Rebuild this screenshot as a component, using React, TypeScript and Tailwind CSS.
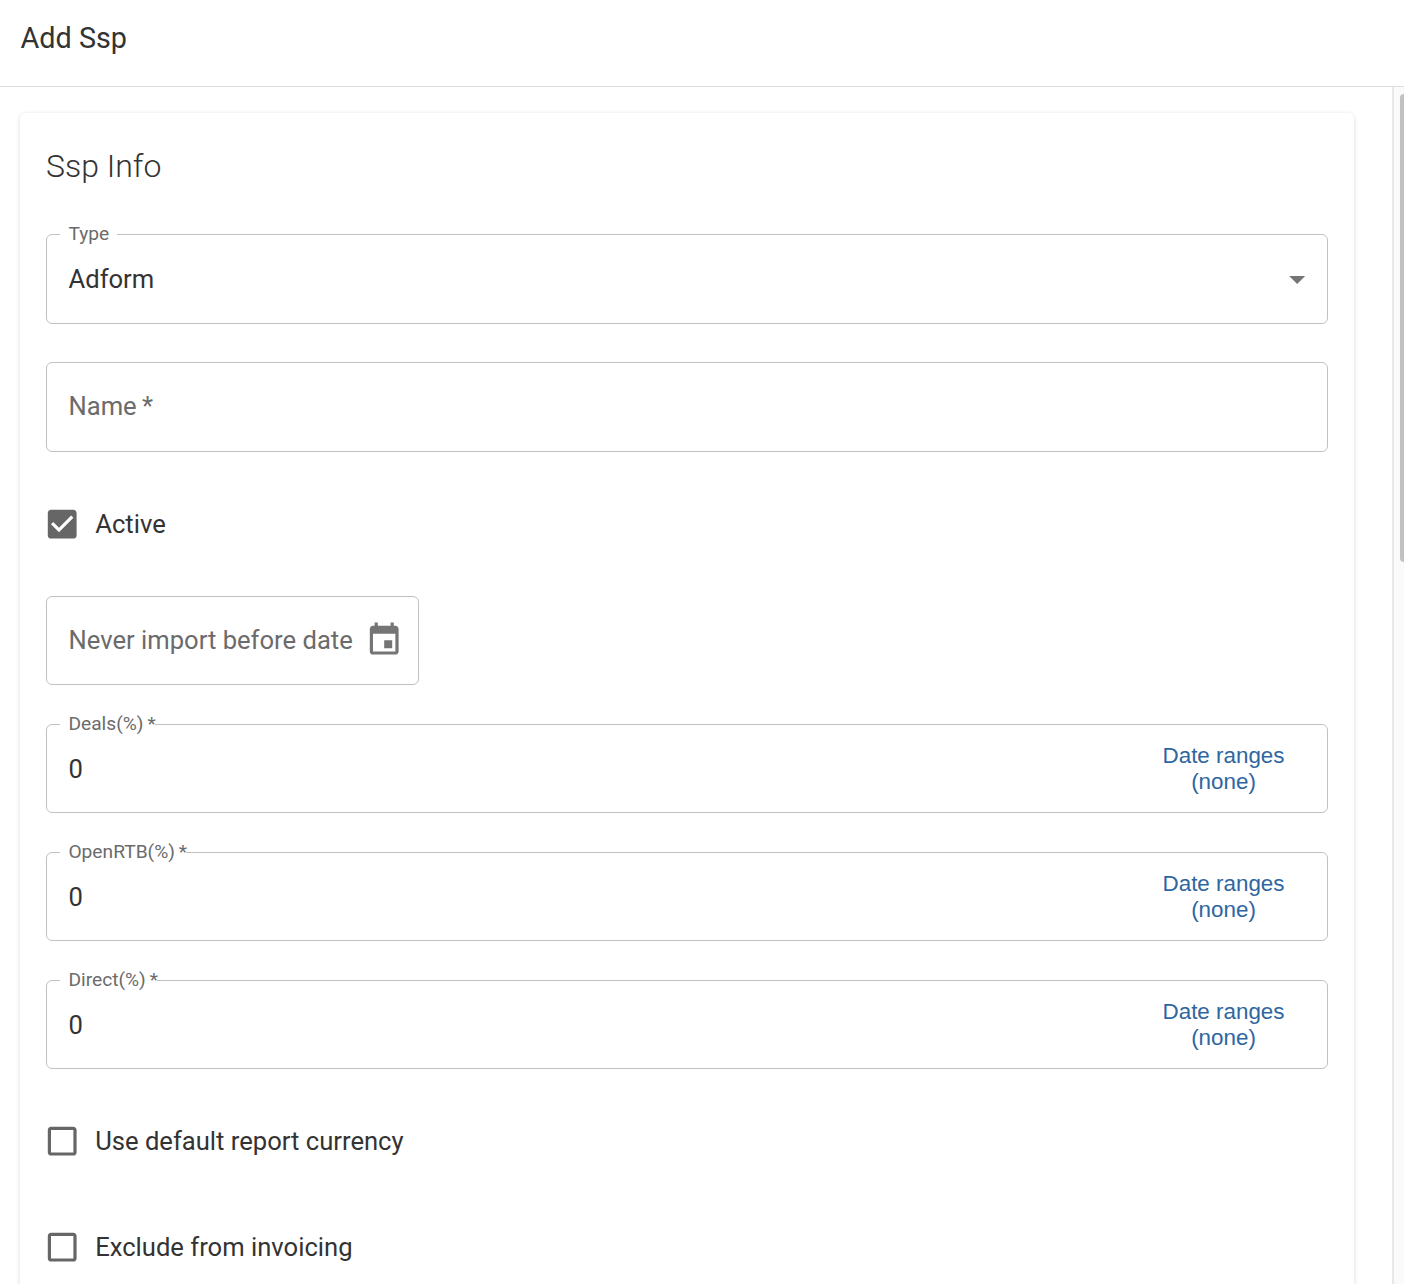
import { useState } from "react";
import type { ReactNode } from "react";
import clsx from "clsx";

type OutlinedFieldProps = {
  label?: string;
  notch?: string;
  className?: string;
  children: ReactNode;
};

const OutlinedField = ({ label, notch, className, children }: OutlinedFieldProps) => (
  <div className={clsx("relative flex items-center rounded-[6px] border border-[#c1c1c1] pl-[21.5px]", className)}>
    {label && (
      <>
        <span className={clsx("absolute -top-px left-[13px] h-px bg-white", notch)} />
        <label className="absolute -top-[13px] left-[21.4px] whitespace-pre text-[19.2px] leading-6 text-[#6b6b6b]">
          {label}
        </label>
      </>
    )}
    {children}
  </div>
);

type CheckboxProps = {
  label: string;
  checked: boolean;
  onChange: () => void;
  className?: string;
};

const Checkbox = ({ label, checked, onChange, className }: CheckboxProps) => (
  <button
    type="button"
    role="checkbox"
    aria-checked={checked}
    onClick={onChange}
    className={clsx("-ml-[3.2px] flex h-10 w-fit items-center gap-[14px]", className)}
  >
    <svg viewBox="0 0 24 24" className="size-[38.4px] fill-[#666]">
      {checked ? (
        <path d="M19 3H5c-1.11 0-2 .9-2 2v14c0 1.1.89 2 2 2h14c1.11 0 2-.9 2-2V5c0-1.1-.89-2-2-2zm-9 14l-5-5 1.41-1.41L10 14.17l7.59-7.59L19 8l-9 9z" />
      ) : (
        <path d="M19 5v14H5V5h14m0-2H5c-1.1 0-2 .9-2 2v14c0 1.1.9 2 2 2h14c1.1 0 2-.9 2-2V5c0-1.1-.9-2-2-2z" />
      )}
    </svg>
    <span>{label}</span>
  </button>
);

export default function App() {
  const [active, setActive] = useState(true);
  const [defaultCurrency, setDefaultCurrency] = useState(false);
  const [excluded, setExcluded] = useState(false);

  // \u2009 is the thin space before the required mark
  const shares = [
    { label: "Deals(%)\u2009*", notch: "w-[95px]" },
    { label: "OpenRTB(%)\u2009*", notch: "w-[126px]" },
    { label: "Direct(%)\u2009*", notch: "w-[97px]" },
  ];

  return (
    <div className="flex h-[1284px] w-[1404px] flex-col overflow-hidden bg-white font-['Roboto',sans-serif] text-[25.6px] text-[#333] antialiased">
      <header className="h-[87px] shrink-0 border-b border-[#dedede] pl-[20.5px] pt-[18px]">
        <h1 className="text-[28.8px] leading-10">Add Ssp</h1>
      </header>

      <div className="flex min-h-0 flex-1">
        <main className="flex-1 overflow-hidden pl-5 pr-[38px] pt-[26px]">
          <section className="flex h-[1400px] flex-col rounded-[6px] px-[26px] pt-8 shadow-[0_1px_4px_rgba(0,0,0,0.16)]">
            <h2 className="text-[32px] font-light leading-[43px]">Ssp Info</h2>

            <OutlinedField label="Type" notch="w-[57px]" className="mt-[46px] h-[90px] justify-between pr-[10.6px]">
              <span>Adform</span>
              <svg viewBox="0 0 24 24" className="size-[38.4px] fill-[#757575]">
                <path d="M7 10l5 5 5-5z" />
              </svg>
            </OutlinedField>

            <OutlinedField className="mt-[38px] h-[90px] pb-[2px] text-[#6b6b6b]">
              <span>Name{"\u2009"}*</span>
            </OutlinedField>

            <Checkbox label="Active" checked={active} onChange={() => setActive(!active)} className="mt-[52px]" />

            <OutlinedField className="mt-[52px] h-[89px] w-[373px] justify-between pr-[15px] text-[#6b6b6b]">
              <span>Never import before date</span>
              <svg viewBox="0 0 24 24" className="size-[38.4px] fill-[#757575]">
                <path d="M17 12h-5v5h5v-5zM16 1v2H8V1H6v2H5c-1.11 0-1.99.9-1.99 2L3 19c0 1.1.89 2 2 2h14c1.1 0 2-.9 2-2V5c0-1.1-.9-2-2-2h-1V1h-2zm3 18H5V8h14v11z" />
              </svg>
            </OutlinedField>

            {shares.map((share) => (
              <OutlinedField
                key={share.label}
                label={share.label}
                notch={share.notch}
                className="mt-[39px] h-[89px] justify-between pr-[42.5px]"
              >
                <span className="pt-[2px]">0</span>
                <button
                  type="button"
                  className="font-['Liberation_Sans',Arial,sans-serif] text-[22.4px] leading-[26px] text-[#2f669f]"
                >
                  Date ranges
                  <br />
                  (none)
                </button>
              </OutlinedField>
            ))}

            <Checkbox
              label="Use default report currency"
              checked={defaultCurrency}
              onChange={() => setDefaultCurrency(!defaultCurrency)}
              className="mt-[52px]"
            />
            <Checkbox
              label="Exclude from invoicing"
              checked={excluded}
              onChange={() => setExcluded(!excluded)}
              className="mt-[66px]"
            />
          </section>
        </main>

        {/* Scrollbar track */}
        <div className="flex w-3 justify-end border-l-2 border-[#e8e8e8] bg-[#fafafa] pt-[7px]">
          <div className="h-[468px] w-1 rounded-l-[5px] bg-[#c1c1c1]" />
        </div>
      </div>
    </div>
  );
}
